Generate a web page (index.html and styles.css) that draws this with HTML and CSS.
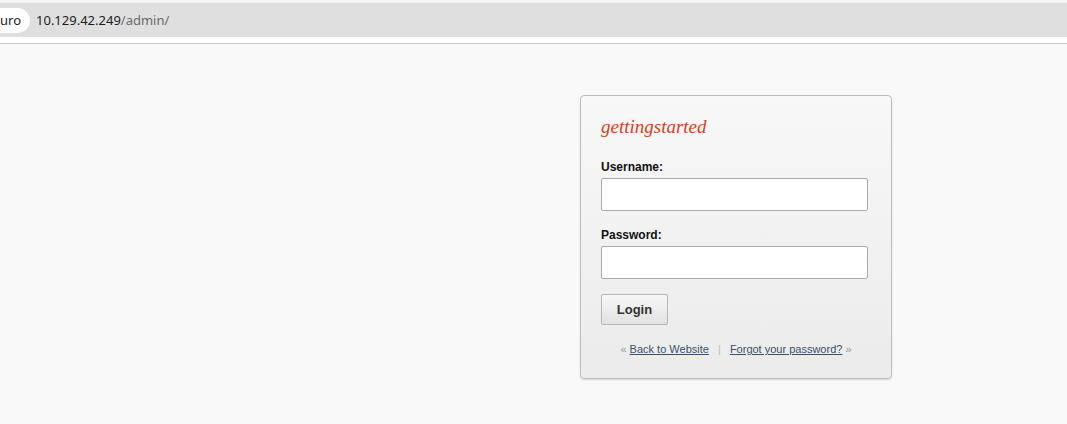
FILE: index.html
```html
<!DOCTYPE html>
<html lang="en">
<head>
  <meta charset="UTF-8">
  <title>Login</title>
  <link rel="stylesheet" href="styles.css">
</head>
<body>
  <div class="topbar">
    <div class="urlbar">
      <span class="pill">uro</span>
      <span class="url">10.129.42.249<span class="path">/admin/</span></span>
    </div>
  </div>
  <div class="gap"></div>

  <div class="page">
    <div class="loginbox">
      <h1 class="sitename">gettingstarted</h1>
      <form>
        <label for="username">Username:</label>
        <input type="text" id="username">
        <label for="password">Password:</label>
        <input type="password" id="password">
        <button type="button">Login</button>
      </form>
      <p class="links">
        <span class="quo">&laquo;</span> <a href="#">Back to Website</a>
        <span class="sep">|</span>
        <a href="#">Forgot your password?</a> <span class="quo">&raquo;</span>
      </p>
    </div>
  </div>
</body>
</html>
```

FILE: styles.css
```css
body {
  margin: 0;
  background-color: #f9f9f9;
  font-family: "Liberation Sans", Arial, sans-serif;
  color: #222;
}

.topbar {
  background-color: #f2f2f2;
  padding-top: 3px;
}

.urlbar {
  height: 34px;
  background-color: #dfdfdf;
  display: flex;
  align-items: center;
  font-family: "Noto Sans", sans-serif;
  font-size: 13px;
}

.pill {
  background-color: #fff;
  height: 25px;
  line-height: 25px;
  padding: 0 9px 0 0;
  border-radius: 0 13px 13px 0;
  color: #222;
  margin-right: 6px;
}

.url {
  color: #1d1d1d;
}

.path {
  color: #6a6a6a;
}

.gap {
  height: 6px;
  background-color: #fff;
  border-bottom: 1px solid #c8c8c8;
}

.page {
  padding: 51px 0 40px 580px;
}

.loginbox {
  width: 270px;
  padding: 19px 20px 22px 20px;
  border: 1px solid #bdbdbd;
  border-radius: 4px;
  background: linear-gradient(#f8f8f8, #ebebeb);
  box-shadow: 0 1px 2px rgba(0, 0, 0, 0.15);
}

.sitename {
  margin: 0;
  font-family: "Liberation Serif", "Times New Roman", serif;
  font-style: italic;
  font-weight: normal;
  font-size: 19px;
  line-height: 24px;
  color: #d4431a;
}

form {
  margin-top: 21px;
}

label {
  display: block;
  font-size: 12px;
  font-weight: bold;
  line-height: 15px;
  color: #111;
}

input {
  display: block;
  box-sizing: border-box;
  width: 267px;
  height: 33px;
  margin: 3px 0 17px 0;
  border: 1px solid #a9a9a9;
  border-radius: 2px;
  background-color: #fff;
}

#password {
  margin-bottom: 15px;
}

button {
  display: block;
  margin: 0;
  width: 67px;
  height: 31px;
  border: 1px solid #b5b5b5;
  border-radius: 2px;
  background: linear-gradient(#f7f7f7, #e2e2e2);
  font-family: "Liberation Sans", Arial, sans-serif;
  font-size: 13px;
  font-weight: bold;
  color: #333;
}

.links {
  margin: 17px 0 0 0;
  text-align: center;
  font-size: 11px;
  line-height: 14px;
  color: #999;
}

.links a {
  color: #3a5068;
}

.sep {
  color: #bbb;
  margin: 0 6px;
}
```
